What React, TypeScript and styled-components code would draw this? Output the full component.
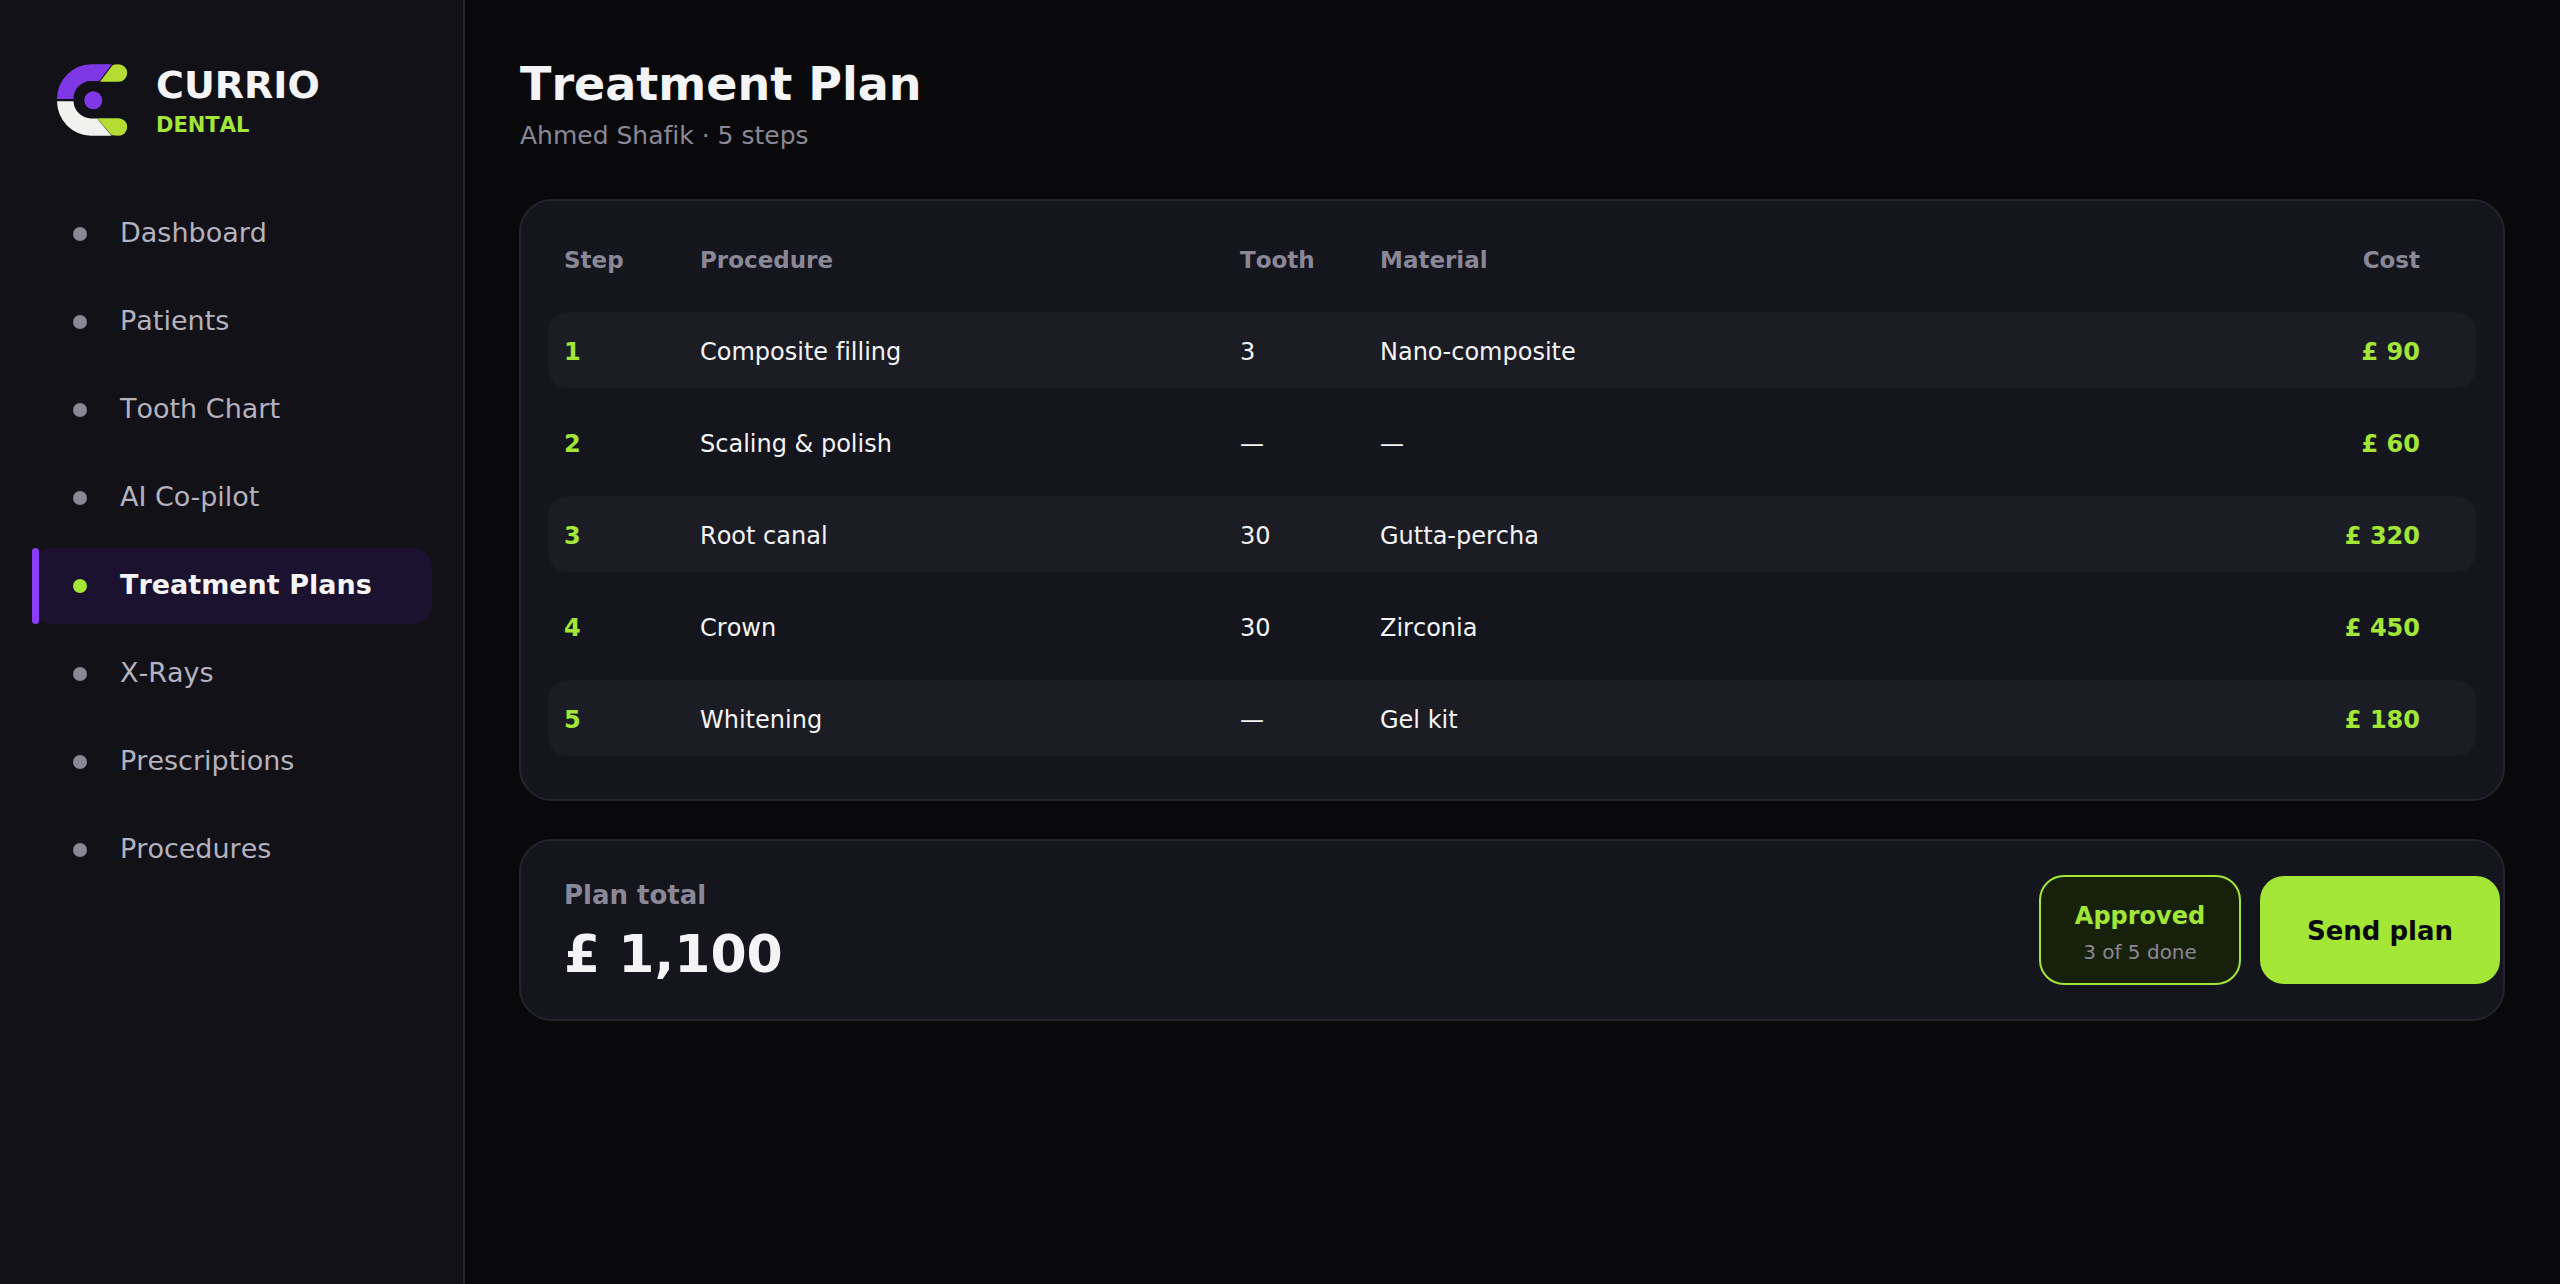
import React from "react";
import styled, { createGlobalStyle } from "styled-components";

const c = {
  page: "#09090b",
  sidebar: "#111117",
  card: "#15151e",
  line: "#24242c",
  row: "#1c1c25",
  text: "#f4f4f6",
  nav: "#b4b2be",
  muted: "#8a8896",
  lime: "#a3e635",
  purple: "#8b3dff",
};

const GlobalStyle = createGlobalStyle`
  *, *::before, *::after { box-sizing: border-box; }
  body {
    margin: 0;
    background: ${c.page};
    color: ${c.text};
    font-family: "DejaVu Sans", sans-serif;
    font-kerning: none;
    font-variant-ligatures: none;
  }
`;

const Shell = styled.div`
  display: flex;
  min-height: 100vh;
`;

const Sidebar = styled.aside`
  flex: 0 0 465px;
  padding: 56px 31px 40px 32px;
  background: ${c.sidebar};
  border-right: 2px solid ${c.line};
`;

const Brand = styled.div`
  display: flex;
  align-items: center;
  gap: 28px;
  height: 88px;
  padding-left: 24px;
`;

const BrandName = styled.div`
  padding-top: 6px;
  font-size: 38px;
  font-weight: 700;
  line-height: 44px;
`;

const BrandTag = styled.div`
  color: ${c.lime};
  font-size: 21px;
  font-weight: 700;
  line-height: 36px;
`;

const Nav = styled.nav`
  display: flex;
  flex-direction: column;
  gap: 12px;
  margin-top: 52px;
`;

const Dot = styled.span<{ $active: boolean }>`
  width: 14px;
  height: 14px;
  border-radius: 50%;
  background: ${(p) => (p.$active ? c.lime : c.muted)};
`;

const NavLink = styled.a<{ $active: boolean }>`
  position: relative;
  display: flex;
  align-items: center;
  gap: 33px;
  height: 76px;
  padding-left: 41px;
  border-radius: 20px;
  background: ${(p) => (p.$active ? "#1a122e" : "transparent")};
  color: ${(p) => (p.$active ? c.text : c.nav)};
  font-size: 27px;
  font-weight: ${(p) => (p.$active ? 700 : 400)};
  line-height: 32px;
  text-decoration: none;

  &::before {
    content: "";
    display: ${(p) => (p.$active ? "block" : "none")};
    position: absolute;
    inset: 0 auto 0 0;
    width: 7px;
    border-radius: 4px;
    background: ${c.purple};
  }
`;

const NavText = styled.span`
  padding-bottom: 2px;
`;

const Main = styled.main`
  flex: 1;
  min-width: 0;
  padding: 56px 55px 56px 54px;
`;

const PageHeader = styled.header`
  padding: 0 1px 47px;
`;

const Title = styled.h1`
  margin: 0;
  font-size: 46px;
  font-weight: 700;
  line-height: 56px;
`;

const Subtitle = styled.p`
  margin: 8px 0 0;
  color: ${c.muted};
  font-size: 25px;
  line-height: 32px;
`;

const Card = styled.section`
  border: 2px solid ${c.line};
  border-radius: 33px;
  background: ${c.card};
`;

const TableCard = styled(Card)`
  padding: 3px 27px 27px;
`;

const Table = styled.table`
  width: 100%;
  table-layout: fixed;
  border-collapse: separate;
  border-spacing: 0 16px;
  font-size: 24px;
  line-height: 32px;
`;

const Col = styled.col<{ $w?: number }>`
  width: ${(p) => (p.$w ? `${p.$w}px` : "auto")};
`;

const Th = styled.th<{ $end?: boolean }>`
  height: 76px;
  padding: 3px 0 0;
  color: ${c.muted};
  font-size: 23px;
  font-weight: 700;
  text-align: ${(p) => (p.$end ? "right" : "left")};

  &:first-child { padding-left: 16px; }
  &:last-child { padding-right: 56px; }
`;

const Td = styled.td<{ $strong?: boolean; $end?: boolean }>`
  height: 76px;
  padding: 3px 0 0;
  color: ${(p) => (p.$strong ? c.lime : c.text)};
  font-weight: ${(p) => (p.$strong ? 700 : 400)};
  text-align: ${(p) => (p.$end ? "right" : "left")};

  &:first-child {
    padding-left: 16px;
    border-radius: 20px 0 0 20px;
  }
  &:last-child {
    padding-right: 56px;
    border-radius: 0 20px 20px 0;
  }
`;

const Row = styled.tr`
  &:nth-child(odd) > td { background: ${c.row}; }
`;

const SummaryCard = styled(Card)`
  display: flex;
  align-items: center;
  justify-content: space-between;
  margin-top: 38px;
  padding: 30px 3px 30px 43px;
`;

const TotalLabel = styled.div`
  color: ${c.muted};
  font-size: 26px;
  font-weight: 700;
  line-height: 48px;
`;

const TotalValue = styled.div`
  font-size: 52px;
  font-weight: 700;
  line-height: 70px;
`;

const Actions = styled.div`
  display: flex;
  align-items: center;
  gap: 19px;
`;

const Status = styled.div`
  display: flex;
  flex-direction: column;
  align-items: center;
  justify-content: center;
  width: 202px;
  height: 110px;
  padding-top: 4px;
  border: 2px solid ${c.lime};
  border-radius: 25px;
  background: #17200a;
`;

const StatusName = styled.span`
  color: ${c.lime};
  font-size: 24px;
  font-weight: 700;
  line-height: 40px;
`;

const StatusNote = styled.span`
  color: ${c.muted};
  font-size: 20px;
  line-height: 32px;
`;

const SendButton = styled.button`
  width: 240px;
  height: 108px;
  padding: 2px 0 0;
  border: 0;
  border-radius: 24px;
  background: ${c.lime};
  color: ${c.page};
  font-family: inherit;
  font-size: 26px;
  font-weight: 700;
  line-height: 32px;
  cursor: pointer;
`;

const Logo = () => (
  <svg width="72" height="72" viewBox="0 0 72 72" aria-hidden="true">
    <path d="M1 35A34.5 34.5 0 0 1 35 .3H55.8L43.3 17H35A17.5 17.5 0 0 0 17.5 35Z" fill="#7f38e6" />
    <path d="M1 37.3H17.5A18 18 0 0 0 35 54.5H41L55.5 71.7H35A34.5 34.5 0 0 1 1 37.3Z" fill="#f1f1ef" />
    <path d="M56.5 1.2Q58 .3 62.5 .3A8.7 8.7 0 0 1 62.5 17.7H44Z" fill="#b4dc32" />
    <path d="M41 54.3H62.5A8.7 8.7 0 0 1 62.5 71.7Q58 71.7 55.5 71Z" fill="#b4dc32" />
    <circle cx="37.3" cy="36.3" r="9" fill="#7f38e6" />
  </svg>
);

const navItems = [
  "Dashboard",
  "Patients",
  "Tooth Chart",
  "AI Co-pilot",
  "Treatment Plans",
  "X-Rays",
  "Prescriptions",
  "Procedures",
];

const steps = [
  { procedure: "Composite filling", tooth: "3", material: "Nano-composite", cost: 90 },
  { procedure: "Scaling & polish", tooth: "—", material: "—", cost: 60 },
  { procedure: "Root canal", tooth: "30", material: "Gutta-percha", cost: 320 },
  { procedure: "Crown", tooth: "30", material: "Zirconia", cost: 450 },
  { procedure: "Whitening", tooth: "—", material: "Gel kit", cost: 180 },
];

const money = (n: number) => `£ ${n.toLocaleString("en-GB")}`;

export default function App() {
  const current = "Treatment Plans";
  const total = steps.reduce((sum, s) => sum + s.cost, 0);

  return (
    <>
      <GlobalStyle />
      <Shell>
        <Sidebar>
          <Brand>
            <Logo />
            <div>
              <BrandName>CURRIO</BrandName>
              <BrandTag>DENTAL</BrandTag>
            </div>
          </Brand>
          <Nav>
            {navItems.map((item) => (
              <NavLink
                key={item}
                href="#"
                $active={item === current}
                aria-current={item === current ? "page" : undefined}
              >
                <Dot $active={item === current} />
                <NavText>{item}</NavText>
              </NavLink>
            ))}
          </Nav>
        </Sidebar>
        <Main>
          <PageHeader>
            <Title>Treatment Plan</Title>
            <Subtitle>Ahmed Shafik · {steps.length} steps</Subtitle>
          </PageHeader>
          <TableCard>
            <Table>
              <colgroup>
                <Col $w={152} />
                <Col $w={540} />
                <Col $w={140} />
                <Col />
                <Col $w={300} />
              </colgroup>
              <thead>
                <tr>
                  <Th>Step</Th>
                  <Th>Procedure</Th>
                  <Th>Tooth</Th>
                  <Th>Material</Th>
                  <Th $end>Cost</Th>
                </tr>
              </thead>
              <tbody>
                {steps.map((s, i) => (
                  <Row key={s.procedure}>
                    <Td $strong>{i + 1}</Td>
                    <Td>{s.procedure}</Td>
                    <Td>{s.tooth}</Td>
                    <Td>{s.material}</Td>
                    <Td $strong $end>{money(s.cost)}</Td>
                  </Row>
                ))}
              </tbody>
            </Table>
          </TableCard>
          <SummaryCard>
            <div>
              <TotalLabel>Plan total</TotalLabel>
              <TotalValue>{money(total)}</TotalValue>
            </div>
            <Actions>
              <Status>
                <StatusName>Approved</StatusName>
                <StatusNote>3 of 5 done</StatusNote>
              </Status>
              <SendButton type="button">Send plan</SendButton>
            </Actions>
          </SummaryCard>
        </Main>
      </Shell>
    </>
  );
}
